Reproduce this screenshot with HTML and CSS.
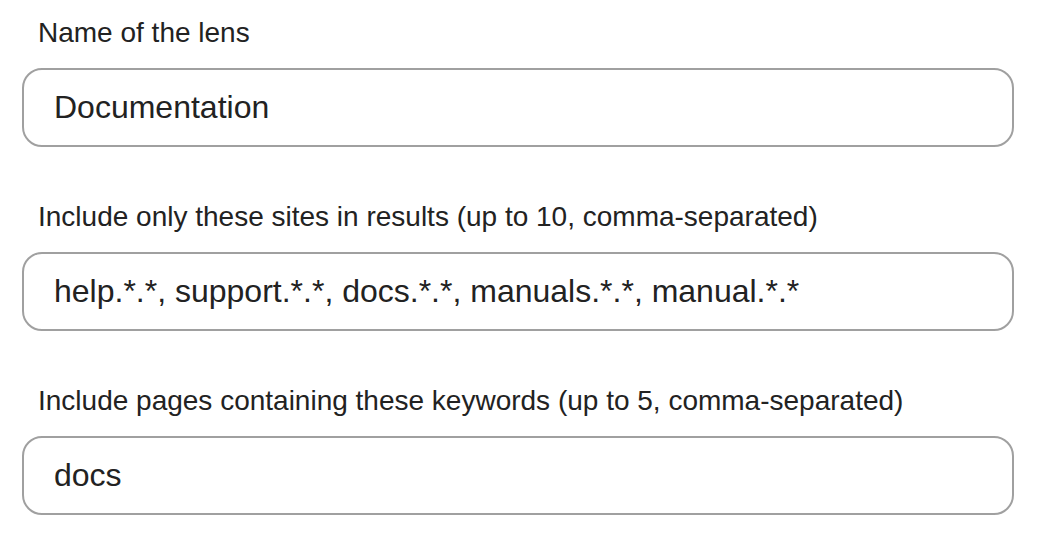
FILE: index.html
```html
<!DOCTYPE html>
<html lang="en">
<head>
<meta charset="utf-8">
<title>Lens settings</title>
<link rel="stylesheet" href="styles.css">
</head>
<body>
<form class="lens-form">
  <div class="field">
    <label class="field-label" for="name">Name of the lens</label>
    <input class="field-input" id="name" type="text" value="Documentation">
  </div>
  <div class="field">
    <label class="field-label" for="sites">Include only these sites in results (up to 10, comma-separated)</label>
    <input class="field-input" id="sites" type="text" value="help.*.*, support.*.*, docs.*.*, manuals.*.*, manual.*.*">
  </div>
  <div class="field">
    <label class="field-label" for="keywords">Include pages containing these keywords (up to 5, comma-separated)</label>
    <input class="field-input" id="keywords" type="text" value="docs">
  </div>
</form>
</body>
</html>
```

FILE: styles.css
```css
html, body {
  margin: 0;
  padding: 0;
  background: #ffffff;
}

body {
  font-family: "Liberation Sans", Arial, Helvetica, sans-serif;
  color: #222222;
}

.lens-form {
  display: flex;
  flex-direction: column;
  gap: 54px;
  padding: 17px 26px 0 22px;
}

.field {
  display: flex;
  flex-direction: column;
}

.field-label {
  display: block;
  font-size: 28px;
  line-height: 32px;
  padding-left: 16px;
  margin-bottom: 19px;
  color: #222222;
}

.field-input {
  box-sizing: border-box;
  width: 100%;
  height: 79px;
  margin: 0;
  padding: 0 30px;
  border: 2px solid #a0a0a0;
  border-radius: 20px;
  background: #ffffff;
  font-family: "Liberation Sans", Arial, Helvetica, sans-serif;
  font-size: 32px;
  color: #222222;
  outline: none;
}
```
